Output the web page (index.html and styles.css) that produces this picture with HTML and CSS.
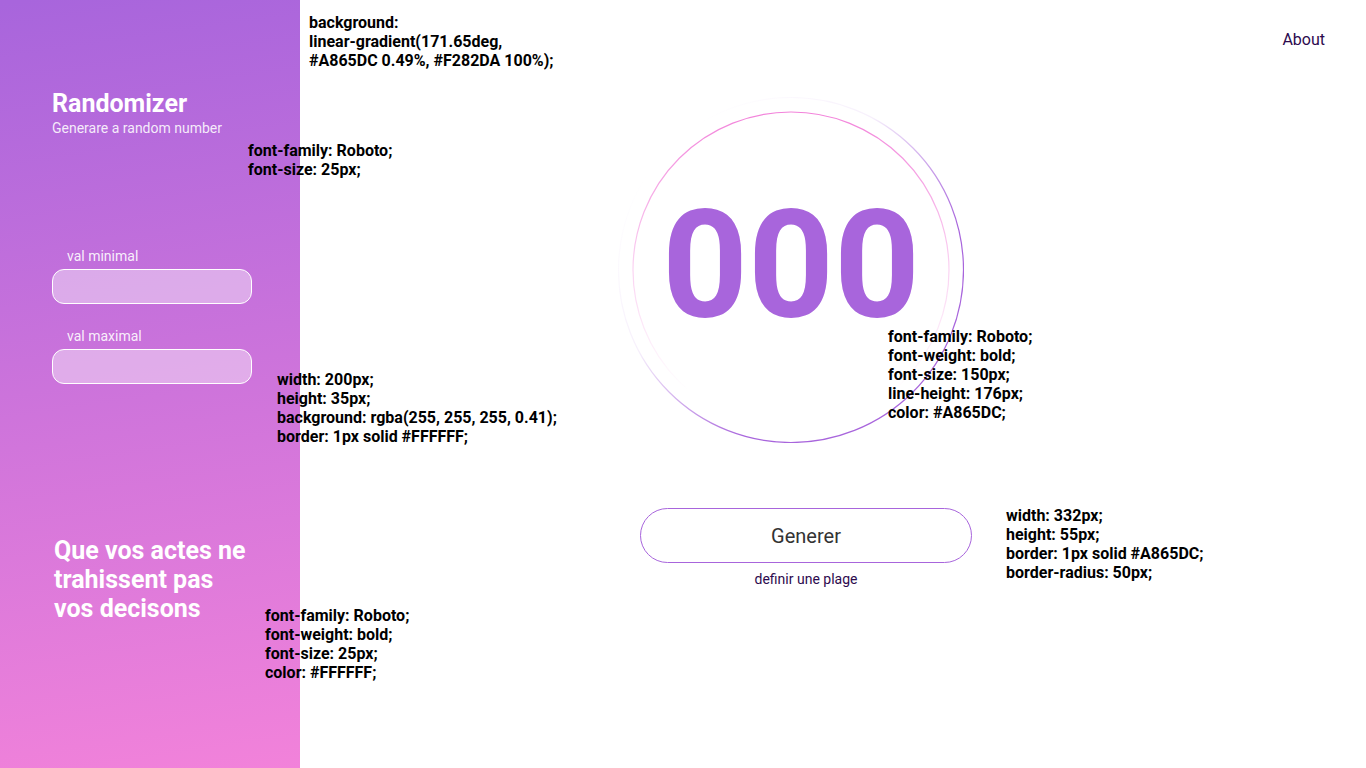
FILE: index.html
```html
<!DOCTYPE html>
<html lang="fr">
<head>
<meta charset="utf-8">
<title>Randomizer</title>
<link rel="stylesheet" href="styles.css">
</head>
<body>
<div class="page">
  <aside class="sidebar">
    <h1 class="brand">Randomizer</h1>
    <p class="tagline">Generare a random number</p>
    <label class="field-label" for="min">val minimal</label>
    <input class="field" id="min" type="text">
    <label class="field-label field-label--second" for="max">val maximal</label>
    <input class="field" id="max" type="text">
    <p class="quote">Que vos actes ne<br>trahissent pas<br>vos decisons</p>
  </aside>
  <main class="main">
    <nav class="topbar"><a class="about" href="#">About</a></nav>
    <div class="stage">
      <svg class="rings" viewBox="0 0 346 346" width="346" height="346">
        <defs>
          <linearGradient id="gInner" x1="0" y1="0" x2="0" y2="1">
            <stop offset="0" stop-color="#F282DA" stop-opacity="1"/>
            <stop offset="0.5" stop-color="#F282DA" stop-opacity="0.35"/>
            <stop offset="0.88" stop-color="#F282DA" stop-opacity="0"/>
          </linearGradient>
          <linearGradient id="gOuter" x1="0.15" y1="0.15" x2="0.85" y2="0.85">
            <stop offset="0" stop-color="#A865DC" stop-opacity="0"/>
            <stop offset="0.35" stop-color="#A865DC" stop-opacity="0.1"/>
            <stop offset="0.75" stop-color="#A865DC" stop-opacity="1"/>
          </linearGradient>
        </defs>
        <circle cx="173" cy="173" r="172.5" fill="none" stroke="url(#gOuter)" stroke-width="1.2"/>
        <circle cx="173" cy="173" r="158" fill="none" stroke="url(#gInner)" stroke-width="1.2"/>
      </svg>
      <div class="number">000</div>
    </div>
    <div class="actions">
      <button class="generate" type="button">Generer</button>
      <a class="range" href="#">definir une plage</a>
    </div>
  </main>

  <div class="note note--bg">background:<br>linear-gradient(171.65deg,<br>#A865DC 0.49%, #F282DA 100%);</div>
  <div class="note note--title">font-family: Roboto;<br>font-size: 25px;</div>
  <div class="note note--input">width: 200px;<br>height: 35px;<br>background: rgba(255, 255, 255, 0.41);<br>border: 1px solid #FFFFFF;</div>
  <div class="note note--number">font-family: Roboto;<br>font-weight: bold;<br>font-size: 150px;<br>line-height: 176px;<br>color: #A865DC;</div>
  <div class="note note--button">width: 332px;<br>height: 55px;<br>border: 1px solid #A865DC;<br>border-radius: 50px;</div>
  <div class="note note--quote">font-family: Roboto;<br>font-weight: bold;<br>font-size: 25px;<br>color: #FFFFFF;</div>
</div>
</body>
</html>
```

FILE: styles.css
```css
* { box-sizing: border-box; }

html, body {
  margin: 0;
  padding: 0;
  background: #ffffff;
  font-family: Roboto, "Liberation Sans", Arial, sans-serif;
}

.page {
  position: relative;
  display: flex;
  width: 1366px;
  height: 768px;
  overflow: hidden;
}

/* ---------- sidebar ---------- */
.sidebar {
  width: 300px;
  height: 768px;
  flex: none;
  display: flex;
  flex-direction: column;
  align-items: flex-start;
  padding: 89px 0 0 52px;
  background: linear-gradient(171.65deg, #A865DC 0.49%, #F282DA 100%);
  color: #ffffff;
}

.brand {
  margin: 0;
  font-size: 25px;
  line-height: 30px;
  font-weight: 700;
  color: #ffffff;
}

.tagline {
  margin: 1px 0 0;
  font-size: 14px;
  line-height: 16px;
  color: rgba(255, 255, 255, 0.88);
}

.field-label {
  display: block;
  margin: 112px 0 0 15px;
  font-size: 14px;
  line-height: 16px;
  color: rgba(255, 255, 255, 0.9);
}

.field-label--second {
  margin-top: 24px;
}

.field {
  display: block;
  width: 200px;
  height: 35px;
  margin-top: 5px;
  padding: 0 12px;
  background: rgba(255, 255, 255, 0.41);
  border: 1px solid #ffffff;
  border-radius: 12px;
  outline: none;
  font: inherit;
  color: #ffffff;
}

.quote {
  margin: 152px 0 0 2px;
  font-size: 25px;
  line-height: 29px;
  font-weight: 700;
  color: #ffffff;
}

/* ---------- main ---------- */
.main {
  flex: 1;
  display: flex;
  flex-direction: column;
  align-items: flex-start;
}

.topbar {
  align-self: stretch;
  display: flex;
  justify-content: flex-end;
  padding: 31px 41px 0 0;
}

.about {
  font-size: 16px;
  line-height: 18px;
  color: #2d0a4e;
  text-decoration: none;
}

.stage {
  display: grid;
  width: 346px;
  height: 346px;
  margin: 48px 0 0 318px;
}

.rings,
.number {
  grid-area: 1 / 1;
}

.rings {
  display: block;
}

.number {
  justify-self: center;
  align-self: start;
  margin-top: 81px;
  font-size: 150px;
  line-height: 176px;
  font-weight: 700;
  color: #A865DC;
}

.actions {
  display: flex;
  flex-direction: column;
  align-items: center;
  width: 332px;
  margin: 65px 0 0 340px;
}

.generate {
  width: 332px;
  height: 55px;
  background: #ffffff;
  border: 1px solid #A865DC;
  border-radius: 50px;
  font-family: inherit;
  font-size: 20px;
  color: #333333;
  cursor: pointer;
}

.range {
  margin-top: 8px;
  font-size: 14px;
  line-height: 16px;
  color: #2d0a4e;
  text-decoration: none;
}

/* ---------- spec annotations (overlay) ---------- */
.note {
  position: absolute;
  font-size: 16px;
  line-height: 19px;
  font-weight: 700;
  color: #000000;
  white-space: nowrap;
}

.note--bg { left: 309px; top: 13px; }
.note--title { left: 248px; top: 141px; }
.note--input { left: 277px; top: 370px; }
.note--number { left: 888px; top: 327px; }
.note--button { left: 1006px; top: 506px; }
.note--quote { left: 265px; top: 606px; }
```
